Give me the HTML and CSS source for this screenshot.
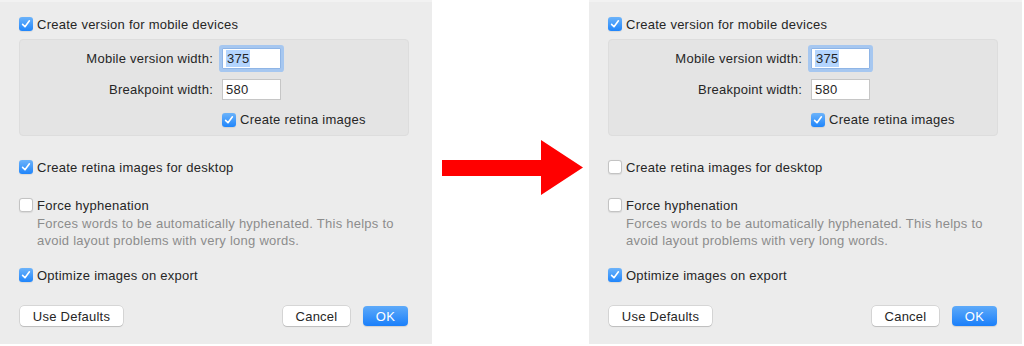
FILE: index.html
```html
<!DOCTYPE html>
<html lang="en">
  <head>
    <meta charset="UTF-8" />
    <title>Export settings</title>
    <link rel="stylesheet" href="styles.css">
  </head>
  <body>
    <div class="page">
      <!-- before -->
      <div class="panel panel-left">
        <label class="check-row">
          <span class="box checked"><svg viewBox="0 0 14 14"><polyline points="3.6,7.4 6,9.8 10.4,3.8" /></svg></span>
          Create version for mobile devices
        </label>
        <div class="mobile-box">
          <span class="field-label">Mobile version width:</span>
          <span class="field focused"><span class="sel">375</span></span>
          <span class="field-label">Breakpoint width:</span>
          <span class="field">580</span>
          <label class="check-row sub-check">
            <span class="box checked"><svg viewBox="0 0 14 14"><polyline points="3.6,7.4 6,9.8 10.4,3.8" /></svg></span>
            Create retina images
          </label>
        </div>
        <label class="check-row desktop-row">
          <span class="box checked"><svg viewBox="0 0 14 14"><polyline points="3.6,7.4 6,9.8 10.4,3.8" /></svg></span>
          Create retina images for desktop
        </label>
        <label class="check-row hyph-row">
          <span class="box"></span>
          Force hyphenation
        </label>
        <p class="desc">Forces words to be automatically hyphenated. This helps to<br>avoid layout problems with very long words.</p>
        <label class="check-row opt-row">
          <span class="box checked"><svg viewBox="0 0 14 14"><polyline points="3.6,7.4 6,9.8 10.4,3.8" /></svg></span>
          Optimize images on export
        </label>
        <div class="buttons">
          <button class="btn defaults">Use Defaults</button>
          <button class="btn cancel">Cancel</button>
          <button class="btn ok">OK</button>
        </div>
      </div>

      <div class="arrow">
        <svg width="157" height="346" viewBox="0 0 157 346">
          <polygon points="10,160 109,160 109,140 151,167.5 109,195 109,176 10,176" fill="#ff0000" />
        </svg>
      </div>

      <!-- after: retina for desktop switched off -->
      <div class="panel panel-right">
        <label class="check-row">
          <span class="box checked"><svg viewBox="0 0 14 14"><polyline points="3.6,7.4 6,9.8 10.4,3.8" /></svg></span>
          Create version for mobile devices
        </label>
        <div class="mobile-box">
          <span class="field-label">Mobile version width:</span>
          <span class="field focused"><span class="sel">375</span></span>
          <span class="field-label">Breakpoint width:</span>
          <span class="field">580</span>
          <label class="check-row sub-check">
            <span class="box checked"><svg viewBox="0 0 14 14"><polyline points="3.6,7.4 6,9.8 10.4,3.8" /></svg></span>
            Create retina images
          </label>
        </div>
        <label class="check-row desktop-row">
          <span class="box"></span>
          Create retina images for desktop
        </label>
        <label class="check-row hyph-row">
          <span class="box"></span>
          Force hyphenation
        </label>
        <p class="desc">Forces words to be automatically hyphenated. This helps to<br>avoid layout problems with very long words.</p>
        <label class="check-row opt-row">
          <span class="box checked"><svg viewBox="0 0 14 14"><polyline points="3.6,7.4 6,9.8 10.4,3.8" /></svg></span>
          Optimize images on export
        </label>
        <div class="buttons">
          <button class="btn defaults">Use Defaults</button>
          <button class="btn cancel">Cancel</button>
          <button class="btn ok">OK</button>
        </div>
      </div>
    </div>
  </body>
</html>
```

FILE: styles.css
```css
* {
  box-sizing: border-box;
}
body {
  margin: 0;
  background-color: #ffffff;
  font-family: "Liberation Sans", Arial, sans-serif;
  font-size: 13px;
  letter-spacing: 0.25px;
  color: #262626;
}
.page {
  display: flex;
  width: 1024px;
  height: 346px;
}

/* the two dialog panels */
.panel {
  height: 344px;
  background-color: #ececec;
  border-top: 2px solid #f2f2f2;
  padding: 12px 0 0 19px;
  display: flex;
  flex-direction: column;
}
.panel-left {
  width: 432px;
  padding-right: 24px;
}
.panel-right {
  width: 433px;
  padding-right: 25px;
}
.arrow {
  width: 157px;
  flex-shrink: 0;
}
.arrow svg {
  display: block;
}

/* checkbox rows */
.check-row {
  display: flex;
  align-items: center;
  height: 20px;
  gap: 4px;
  white-space: nowrap;
}
.box {
  width: 14px;
  height: 14px;
  border-radius: 3px;
  background-color: #ffffff;
  border: 1px solid #c3c3c3;
  box-shadow: 0 0.5px 1px rgba(0, 0, 0, 0.08);
  flex-shrink: 0;
  display: flex;
}
.box.checked {
  border: none;
  background: linear-gradient(#6cb3fa, #1f85fb);
}
.box svg {
  width: 14px;
  height: 14px;
}
.box polyline {
  fill: none;
  stroke: #ffffff;
  stroke-width: 1.6;
  stroke-linecap: round;
  stroke-linejoin: round;
}

/* inset group for the mobile options */
.mobile-box {
  margin-top: 5px;
  width: 390px;
  height: 97px;
  background-color: #e4e4e4;
  border: 1px solid #dddddd;
  border-radius: 4px;
  padding-top: 8px;
  display: grid;
  grid-template-columns: 193px 59px;
  grid-template-rows: 21px 21px 20px;
  column-gap: 9px;
  row-gap: 10px;
  align-items: center;
}
.field-label {
  text-align: right;
}
.field {
  height: 21px;
  width: 59px;
  background-color: #ffffff;
  border: 1px solid #c6c6c6;
  padding: 0 0 0 3px;
  line-height: 19px;
}
.field.focused {
  border-color: #8fb5e6;
  box-shadow: 0 0 0 3px #a6c7f0;
  border-radius: 1px;
}
.sel {
  background-color: #b4d5fe;
  padding: 1px 1px;
}
.sub-check {
  grid-column: 2;
  margin-top: -1px;
}

.desktop-row {
  margin-top: 21px;
}
.hyph-row {
  margin-top: 18px;
}
.desc {
  margin: 0;
  padding-left: 18px;
  line-height: 17px;
  color: #8c8c8c;
}
.opt-row {
  margin-top: 16px;
}

/* bottom buttons */
.buttons {
  display: flex;
  margin-top: 21px;
  gap: 13px;
}
.btn {
  height: 20px;
  font-family: inherit;
  font-size: 13px;
  letter-spacing: 0.25px;
  color: #262626;
  background-color: #ffffff;
  border: none;
  border-radius: 4px;
  box-shadow: 0 0 0 0.5px rgba(0, 0, 0, 0.18), 0 1px 1px rgba(0, 0, 0, 0.12);
  padding: 0;
}
.defaults {
  width: 103px;
  margin-left: 1px;
  margin-right: auto;
}
.cancel {
  width: 67px;
}
.ok {
  width: 45px;
  color: #ffffff;
  background: linear-gradient(#5eaaf9, #1a7ffa);
  box-shadow: 0 1px 1px rgba(0, 0, 0, 0.12);
}
```
